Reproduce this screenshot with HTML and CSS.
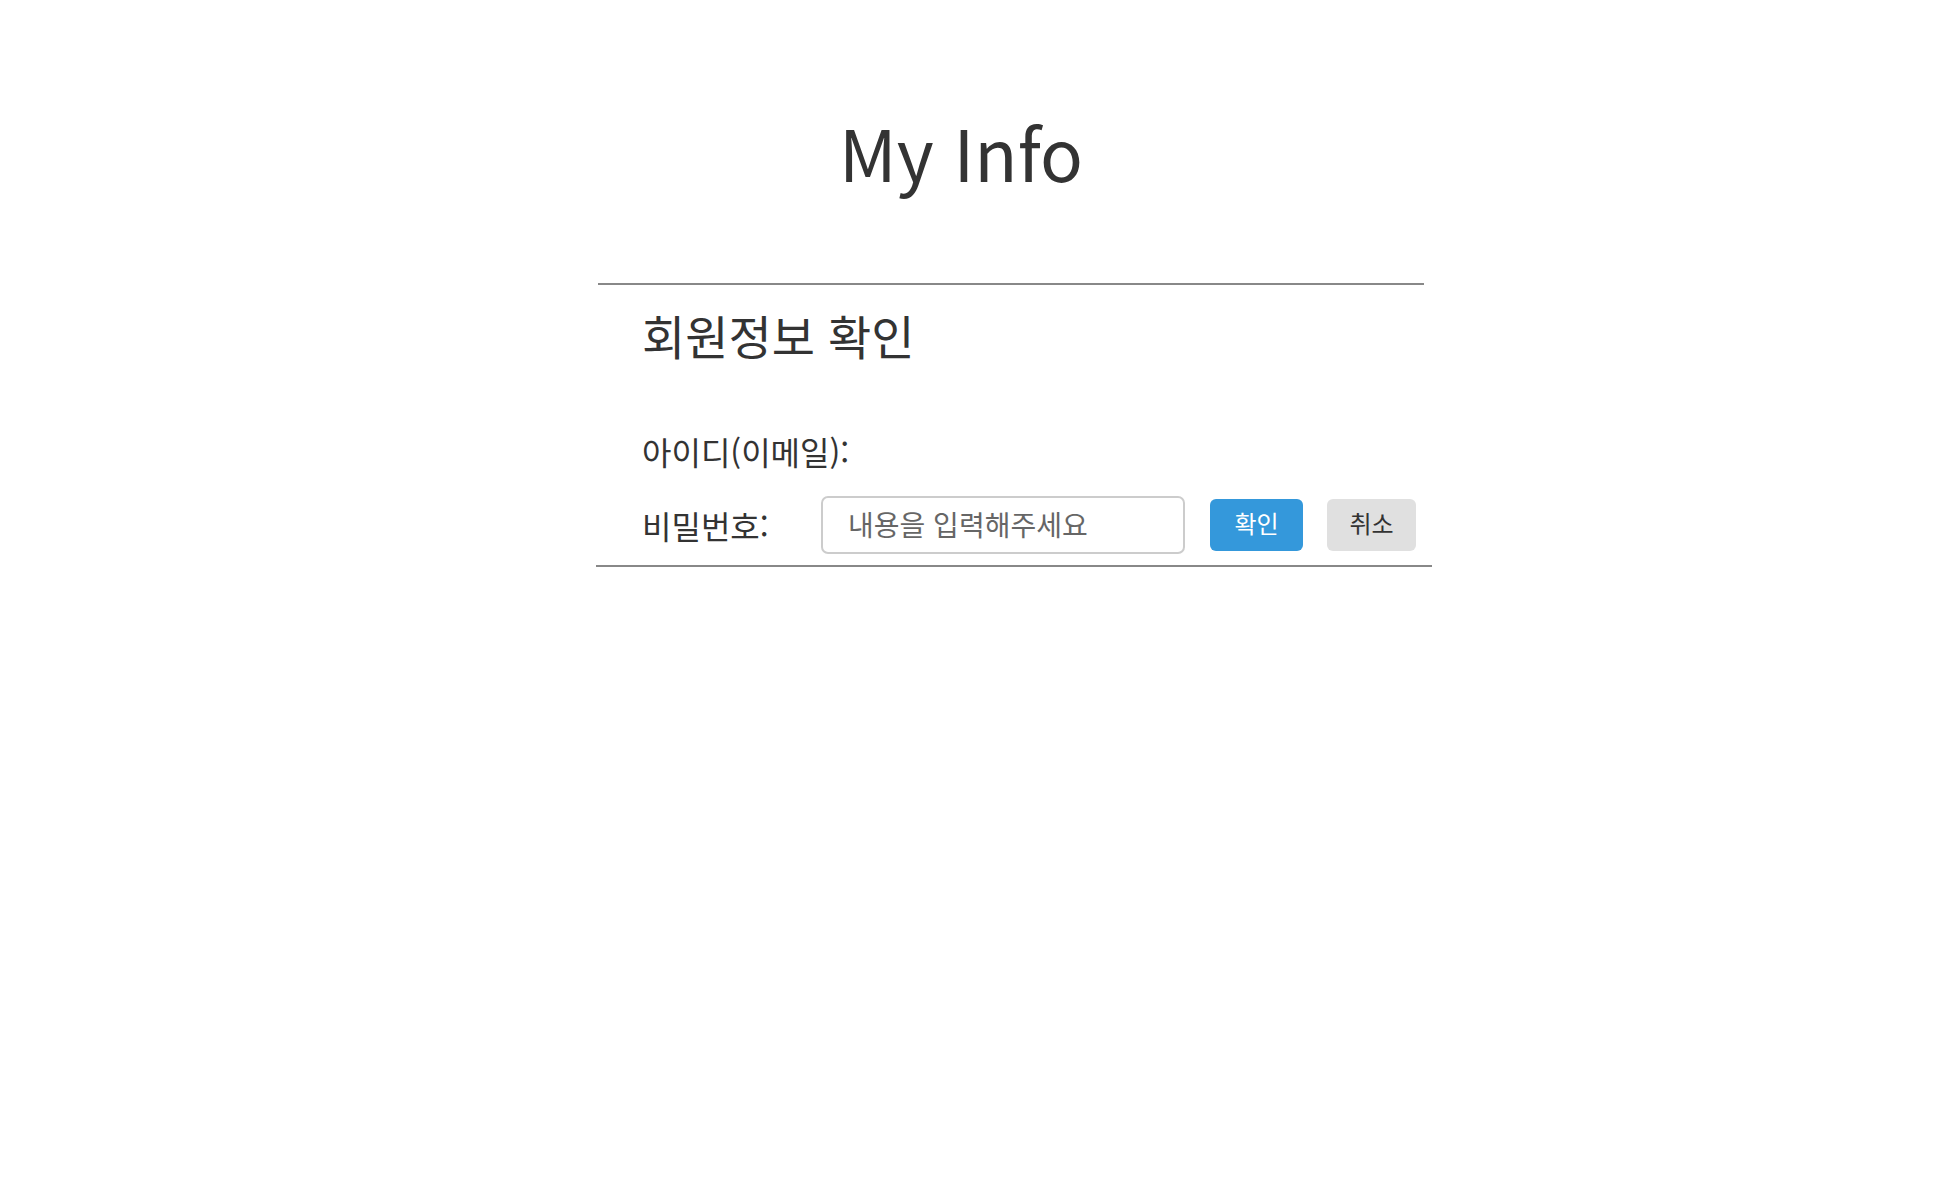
FILE: index.html
```html
<!DOCTYPE html>
<html lang="ko">
<head>
<meta charset="utf-8">
<title>My Info</title>
<link rel="stylesheet" href="styles.css">
</head>
<body>
<header class="page-head">
  <h1 class="page-title">My Info</h1>
</header>
<section class="info">
  <h2 class="info-title">회원정보 확인</h2>
  <div class="info-form">
    <div class="form-row form-row-id">
      <span class="form-label">아이디(이메일):</span>
    </div>
    <div class="form-row form-row-pw">
      <span class="form-label">비밀번호:</span>
      <input class="form-input" type="password" placeholder="내용을 입력해주세요">
      <button class="btn btn-ok" type="button">확인</button>
      <button class="btn btn-cancel" type="button">취소</button>
    </div>
  </div>
</section>
</body>
</html>
```

FILE: styles.css
```css
* { box-sizing: border-box; }

body {
  margin: 0;
  background: #ffffff;
  color: #333333;
  font-family: "Noto Sans CJK KR", "Noto Sans", sans-serif;
}

.page-head {
  padding: 103px 34px 0 0;
}

.page-title {
  margin: 0;
  font-size: 71px;
  line-height: 96px;
  font-weight: 400;
  text-align: center;
  color: #333333;
}

.info {
  width: 826px;
  margin: 84px 0 0 598px;
  border-top: 2px solid #888888;
}

.info-title {
  margin: 0;
  padding: 20px 0 0 44px;
  font-size: 47px;
  line-height: 60px;
  font-weight: 400;
  color: #333333;
}

.info-form {
  margin: 60px -8px 0 -2px;
  padding-left: 46px;
  border-bottom: 2px solid #888888;
}

.form-row {
  display: flex;
  align-items: center;
}

.form-row-id {
  height: 60px;
  padding-bottom: 8px;
}

.form-row-pw { height: 80px; }

.form-label {
  width: 179px;
  flex: none;
  font-size: 32px;
  line-height: 40px;
  white-space: nowrap;
  color: #333333;
}

.form-input {
  width: 364px;
  height: 58px;
  margin: 0 25px 0 0;
  padding: 0 0 2px 25px;
  border: 2px solid #cccccc;
  border-radius: 7px;
  font-family: inherit;
  font-size: 28px;
  color: #333333;
  background: #ffffff;
  outline: none;
}

.form-input::placeholder { color: #666666; }

.btn {
  height: 52px;
  padding: 0 0 6px;
  border: none;
  border-radius: 6px;
  font-family: inherit;
  font-size: 24px;
  cursor: pointer;
}

.btn-ok {
  width: 93px;
  margin-right: 24px;
  background: #3498db;
  color: #ffffff;
}

.btn-cancel {
  width: 89px;
  background: #e0e0e0;
  color: #333333;
}
```
